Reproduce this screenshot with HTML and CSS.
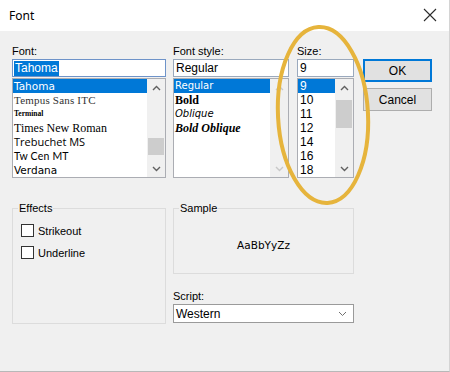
FILE: index.html
```html
<!DOCTYPE html>
<html>
<head>
<meta charset="utf-8">
<link rel="stylesheet" href="styles.css">
</head>
<body>
<div class="window">
  <div class="titlebar">
    <span class="title">Font</span>
    <svg class="close" width="14" height="14" viewBox="0 0 14 14"><path d="M1 1 L13 13 M13 1 L1 13" stroke="#2b2b2b" stroke-width="1.1" fill="none"/></svg>
  </div>
  <div class="main">
    <div class="top">
      <div class="col col-font">
        <div class="label">Font:</div>
        <div class="input focus"><span class="sel">Tahoma</span></div>
        <div class="list">
          <div class="items">
            <div class="item on f-tahoma">Tahoma</div>
            <div class="item f-tempus">Tempus Sans ITC</div>
            <div class="item f-terminal">Terminal</div>
            <div class="item f-times">Times New Roman</div>
            <div class="item f-treb">Trebuchet MS</div>
            <div class="item f-tw">Tw Cen MT</div>
            <div class="item f-verdana">Verdana</div>
          </div>
          <div class="sbar">
            <div class="arrow"><svg width="9" height="6" viewBox="0 0 9 6"><path d="M1 5 L4.5 1.5 L8 5" stroke="#606060" stroke-width="1.4" fill="none"/></svg></div>
            <div class="track"><div class="thumb t-font"></div></div>
            <div class="arrow"><svg width="9" height="6" viewBox="0 0 9 6"><path d="M1 1 L4.5 4.5 L8 1" stroke="#606060" stroke-width="1.4" fill="none"/></svg></div>
          </div>
        </div>
      </div>
      <div class="col col-style">
        <div class="label">Font style:</div>
        <div class="input">Regular</div>
        <div class="list">
          <div class="items">
            <div class="item on s-reg">Regular</div>
            <div class="item s-bold">Bold</div>
            <div class="item s-obl">Oblique</div>
            <div class="item s-bobl">Bold Oblique</div>
          </div>
          <div class="sbar">
            <div class="arrow"><svg width="9" height="6" viewBox="0 0 9 6"><path d="M1 5 L4.5 1.5 L8 5" stroke="#c8c8c8" stroke-width="1.4" fill="none"/></svg></div>
            <div class="track"></div>
            <div class="arrow"><svg width="9" height="6" viewBox="0 0 9 6"><path d="M1 1 L4.5 4.5 L8 1" stroke="#c8c8c8" stroke-width="1.4" fill="none"/></svg></div>
          </div>
        </div>
      </div>
      <div class="col col-size">
        <div class="label">Size:</div>
        <div class="input">9</div>
        <div class="list">
          <div class="items">
            <div class="item on z">9</div>
            <div class="item z">10</div>
            <div class="item z">11</div>
            <div class="item z">12</div>
            <div class="item z">14</div>
            <div class="item z">16</div>
            <div class="item z">18</div>
          </div>
          <div class="sbar">
            <div class="arrow"><svg width="9" height="6" viewBox="0 0 9 6"><path d="M1 5 L4.5 1.5 L8 5" stroke="#606060" stroke-width="1.4" fill="none"/></svg></div>
            <div class="track"><div class="thumb t-size"></div></div>
            <div class="arrow"><svg width="9" height="6" viewBox="0 0 9 6"><path d="M1 1 L4.5 4.5 L8 1" stroke="#606060" stroke-width="1.4" fill="none"/></svg></div>
          </div>
        </div>
      </div>
      <div class="col buttons">
        <div class="btn default">OK</div>
        <div class="btn">Cancel</div>
      </div>
    </div>
    <div class="bottom">
      <fieldset class="group effects">
        <legend>Effects</legend>
        <div class="effects-body">
          <div class="check"><span class="box"></span><span>Strikeout</span></div>
          <div class="check"><span class="box"></span><span>Underline</span></div>
        </div>
      </fieldset>
      <div class="rightcol">
        <fieldset class="group sample">
          <legend>Sample</legend>
          <div class="sample-body">AaBbYyZz</div>
        </fieldset>
        <div class="label script-label">Script:</div>
        <div class="select"><span>Western</span><svg width="9" height="6" viewBox="0 0 9 6"><path d="M1 1 L4.5 4.5 L8 1" stroke="#707070" stroke-width="1" fill="none"/></svg></div>
      </div>
    </div>
  </div>
  <svg class="ring" width="120" height="200" viewBox="0 0 120 200">
    <ellipse cx="60" cy="100" rx="45" ry="88" transform="rotate(-3 60 100)" fill="none" stroke="#e6b43c" stroke-width="4"/>
  </svg>
</div>
</body>
</html>
```
FILE: styles.css
```css
html, body {
  margin: 0;
  padding: 0;
  background: #f0f0f0;
}
.window {
  position: relative;
  width: 450px;
  height: 372px;
  background: #f0f0f0;
  overflow: hidden;
  font-family: "Liberation Sans", Arial, sans-serif;
  font-size: 11px;
  color: #000;
  box-sizing: border-box;
  border-right: 1px solid #d4d4d4;
  border-bottom: 1px solid #b8b8b8;
}
.titlebar {
  height: 31px;
  background: #fff;
  display: flex;
  align-items: center;
  justify-content: space-between;
  padding: 0 12px 0 9px;
}
.title {
  font-family: "Noto Sans", "Open Sans", sans-serif;
  font-size: 12px;
  color: #000;
  margin-top: -1px;
}
.close {
  margin-top: -1px;
}
.main {
  padding: 13px 0 0 12px;
}
.top {
  display: flex;
}
.col {
  display: flex;
  flex-direction: column;
}
.col-font { width: 154px; margin-right: 7px; }
.col-style { width: 116px; margin-right: 8px; }
.col-size { width: 57px; margin-right: 9px; }
.buttons { width: 69px; padding-top: 15px; gap: 6px; }
.label {
  height: 15px;
  line-height: 14px;
  font-size: 11px;
  color: #000;
}
.input {
  height: 18px;
  box-sizing: border-box;
  border: 1px solid #9aa9bd;
  background: #fff;
  font-size: 12px;
  line-height: 16px;
  padding-left: 2px;
}
.input.focus {
  border-color: #6e93c9;
  padding-left: 1px;
}
.sel {
  background: #0078d7;
  color: #fff;
  padding: 0 1px;
  display: inline-block;
  line-height: 15px;
}
.list {
  margin-top: 1px;
  height: 100px;
  box-sizing: border-box;
  border: 1px solid #abadb3;
  background: #fff;
  display: flex;
}
.items {
  flex: 1;
  min-width: 0;
  overflow: hidden;
}
.item {
  height: 14px;
  line-height: 14px;
  padding-left: 1px;
  white-space: nowrap;
  overflow: hidden;
}
.item.on {
  background: #0078d7;
  color: #fff;
}
.sbar {
  width: 18px;
  background: #f0f0f0;
  display: flex;
  flex-direction: column;
}
.arrow {
  height: 17px;
  display: flex;
  align-items: center;
  justify-content: center;
}
.track {
  flex: 1;
  padding: 0 1px;
}
.thumb {
  background: #cdcdcd;
  height: 17px;
}
.t-font { margin-top: 42px; }
.t-size { margin-top: 4px; height: 28px; }

.f-tahoma { font-family: "DejaVu Sans", sans-serif; font-size: 10.5px; }
.f-tempus { font-family: "Liberation Serif", serif; font-size: 11px; color: #333; letter-spacing: 0.2px; }
.f-terminal { font-family: "Liberation Serif", serif; font-size: 7.5px; font-weight: bold; }
.f-times { font-family: "Liberation Serif", serif; font-size: 12px; }
.f-treb { font-family: "Open Sans", sans-serif; font-size: 11px; }
.f-tw { font-family: "Lato", sans-serif; font-size: 10.5px; letter-spacing: 0.2px; }
.f-verdana { font-family: "DejaVu Sans", sans-serif; font-size: 10.5px; }

.s-reg { font-family: "DejaVu Sans", sans-serif; font-size: 10px; }
.s-bold { font-family: "Liberation Serif", serif; font-size: 12px; font-weight: bold; }
.s-obl { font-family: "DejaVu Sans", sans-serif; font-size: 10px; font-style: italic; }
.s-bobl { font-family: "Liberation Serif", serif; font-size: 12px; font-weight: bold; font-style: italic; }
.z { font-size: 12px; padding-left: 2px; }

.btn {
  height: 23px;
  box-sizing: border-box;
  border: 1px solid #adadad;
  background: #e1e1e1;
  display: flex;
  align-items: center;
  justify-content: center;
  font-size: 12px;
}
.btn.default {
  border: 2px solid #0078d7;
}
.bottom {
  display: flex;
  margin-top: 23px;
  gap: 7px;
}
.group {
  margin: 0;
  padding: 0;
  border: 1px solid #dcdcdc;
  min-width: 0;
  box-sizing: border-box;
}
.group legend {
  padding: 0 1px;
  margin-left: 5px;
  line-height: 14px;
  font-size: 11px;
}
.effects {
  width: 154px;
  height: 123px;
}
.effects-body {
  padding: 9px 0 0 8px;
  display: flex;
  flex-direction: column;
  gap: 9px;
}
.check {
  display: flex;
  align-items: center;
  gap: 4px;
  height: 13px;
}
.box {
  width: 13px;
  height: 13px;
  box-sizing: border-box;
  border: 1px solid #333;
  background: #fff;
}
.rightcol {
  width: 181px;
  display: flex;
  flex-direction: column;
}
.sample {
  height: 73px;
}
.sample-body {
  height: 57px;
  display: flex;
  align-items: center;
  justify-content: center;
  padding-top: 3px;
  box-sizing: border-box;
  font-family: "DejaVu Sans", sans-serif;
  font-size: 10.5px;
}
.script-label {
  margin-top: 15px;
}
.select {
  height: 19px;
  box-sizing: border-box;
  border: 1px solid #9a9a9a;
  background: #fff;
  display: flex;
  align-items: center;
  justify-content: space-between;
  padding: 0 6px 0 2px;
  font-size: 12px;
}
.ring {
  position: absolute;
  left: 263px;
  top: 15px;
  pointer-events: none;
}
```
